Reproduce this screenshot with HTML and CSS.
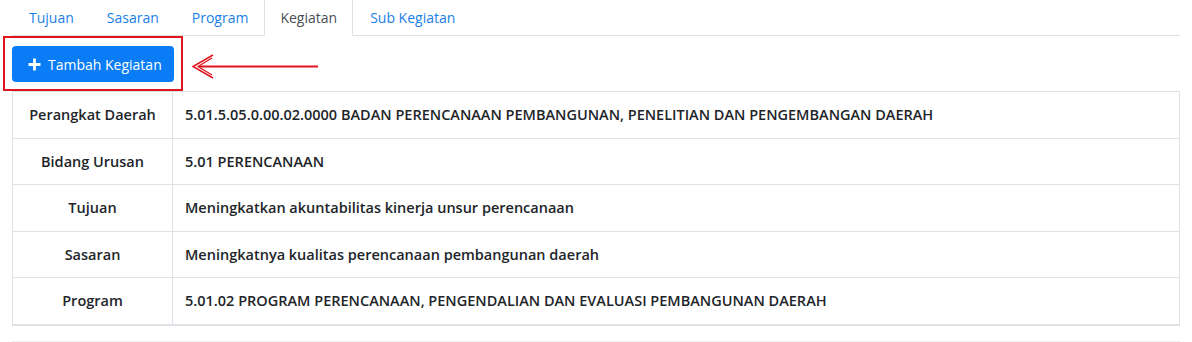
FILE: index.html
```html
<!DOCTYPE html>
<html>
<head>
    <title>Kegiatan</title>
    <link rel="stylesheet" href="styles.css">
</head>
<body>
    <div class="page">
        <ul class="tabs">
            <li><a href="#" class="tab-link">Tujuan</a></li>
            <li><a href="#" class="tab-link">Sasaran</a></li>
            <li><a href="#" class="tab-link">Program</a></li>
            <li><a href="#" class="tab-link active">Kegiatan</a></li>
            <li><a href="#" class="tab-link">Sub Kegiatan</a></li>
        </ul>

        <div class="toolbar">
            <button class="btn-add">
                <svg class="plus" width="13" height="13" viewBox="0 0 13 13">
                    <path d="M6.5 0.5v12M0.5 6.5h12" stroke="#fff" stroke-width="2.8"/>
                </svg>
                Tambah Kegiatan
            </button>
            <!-- annotation overlay -->
            <div class="highlight"></div>
            <svg class="arrow" width="140" height="30" viewBox="0 0 140 30">
                <path d="M9 13.5H128" stroke="#e0141c" stroke-width="1.8"/>
                <path d="M23 2L3 13.5L23 25" fill="none" stroke="#e0141c" stroke-width="1.5"/>
                <path d="M22 5L8 13.5L22 22" fill="none" stroke="#e0141c" stroke-width="1.2"/>
            </svg>
        </div>

        <table class="info-table">
            <tr>
                <th>Perangkat Daerah</th>
                <td>5.01.5.05.0.00.02.0000 BADAN PERENCANAAN PEMBANGUNAN, PENELITIAN DAN PENGEMBANGAN DAERAH</td>
            </tr>
            <tr>
                <th>Bidang Urusan</th>
                <td>5.01 PERENCANAAN</td>
            </tr>
            <tr>
                <th>Tujuan</th>
                <td>Meningkatkan akuntabilitas kinerja unsur perencanaan</td>
            </tr>
            <tr>
                <th>Sasaran</th>
                <td>Meningkatnya kualitas perencanaan pembangunan daerah</td>
            </tr>
            <tr>
                <th>Program</th>
                <td>5.01.02 PROGRAM PERENCANAAN, PENGENDALIAN DAN EVALUASI PEMBANGUNAN DAERAH</td>
            </tr>
        </table>

        <div class="next-section"></div>
    </div>
</body>
</html>
```

FILE: styles.css
```css
body {
    margin: 0;
    font-family: "Open Sans", Arial, sans-serif;
    font-size: 14px;
    color: #212529;
    background-color: #fff;
}
.page {
    padding: 0 12px;
    width: 1168px;
}
.tabs {
    display: flex;
    list-style: none;
    margin: 0;
    padding: 0;
    border-bottom: 1px solid #dee2e6;
}
.tab-link {
    display: block;
    padding: 7px 15px 7px 16px;
    line-height: 21px;
    color: #1a7fe8;
    text-decoration: none;
    border: 1px solid transparent;
    border-top: none;
    margin-bottom: -1px;
}
.tab-link.active {
    color: #495057;
    background-color: #fff;
    border-color: #dee2e6 #dee2e6 #fff;
    padding: 7px 15px;
}
.toolbar {
    position: relative;
    padding: 10px 0 9px;
}
.btn-add {
    display: flex;
    align-items: center;
    gap: 7px;
    height: 36px;
    padding: 0 12px 0 16px;
    border: none;
    border-radius: 4px;
    background-color: #0a7cf5;
    color: #fff;
    font-family: inherit;
    font-size: 14px;
    white-space: nowrap;
    cursor: pointer;
}
.highlight {
    position: absolute;
    left: -9px;
    top: 0;
    width: 176px;
    height: 51px;
    border: 2px solid #e0141c;
}
.arrow {
    position: absolute;
    left: 178px;
    top: 17px;
}
.info-table {
    width: 100%;
    border-collapse: collapse;
    border: 1px solid #dee2e6;
    border-bottom: 2px solid #dee2e6;
}
.info-table th,
.info-table td {
    padding: 12px;
    line-height: 21.5px;
    border: 1px solid #dee2e6;
    font-size: 14.5px;
    font-weight: 600;
    text-align: left;
}
.info-table th {
    width: 135px;
    text-align: center;
}
.next-section {
    margin-top: 15px;
    border-top: 1px solid #f0f0f0;
    height: 4px;
}
```
